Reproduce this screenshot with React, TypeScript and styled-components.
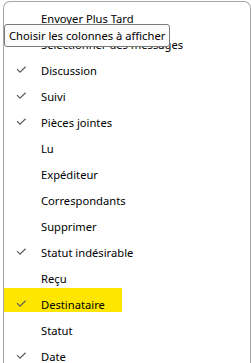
import styled, { createGlobalStyle } from "styled-components";

const GlobalStyle = createGlobalStyle`
  html, body {
    margin: 0;
    padding: 0;
    background: #ffffff;
    overflow: hidden;
  }
  body {
    font-family: "Noto Sans", "Liberation Sans", sans-serif;
  }
`;

const Page = styled.div`
  position: relative;
  width: 251px;
  height: 363px;
  overflow: hidden;
  padding: 1px 0 0 3px;
  box-sizing: border-box;
`;

const Menu = styled.ul`
  list-style: none;
  margin: 0;
  padding: 3px 0 0 0;
  width: 248px;
  height: 400px;
  box-sizing: border-box;
  background: #ffffff;
  border: 1px solid #a6a6a6;
  border-bottom: none;
  border-radius: 7px 7px 0 0;
`;

const Item = styled.li<{ $highlight?: boolean }>`
  position: relative;
  display: flex;
  align-items: center;
  height: 26px;
  padding-left: 12px;
  font-size: 11.2px;
  color: #000000;

  &::before {
    content: "";
    display: ${(p) => (p.$highlight ? "block" : "none")};
    position: absolute;
    left: 0;
    top: -3px;
    width: 118px;
    height: 24px;
    background: #ffe600;
  }
`;

const CheckSlot = styled.span`
  position: relative;
  z-index: 1;
  width: 25px;
  height: 26px;
  display: flex;
  align-items: center;
`;

const Label = styled.span`
  position: relative;
  z-index: 1;
  white-space: nowrap;
`;

const Tooltip = styled.div`
  position: absolute;
  left: 4px;
  top: 24px;
  height: 21px;
  padding: 0 4px;
  display: flex;
  align-items: center;
  font-size: 11.2px;
  color: #000000;
  background: #fbfbfb;
  border: 1px solid #7a7a7a;
  border-radius: 3px;
  white-space: nowrap;
  z-index: 5;
`;

const Check = () => (
  <svg width="11" height="8" viewBox="0 0 11 8">
    <path d="M1 3.2 L4 6.2 L9.6 0.8" fill="none" stroke="#5c5c5c" strokeWidth="1.2" />
  </svg>
);

const items = [
  { label: "Envoyer Plus Tard", checked: false },
  { label: "Sélectionner des messages", checked: false },
  { label: "Discussion", checked: true },
  { label: "Suivi", checked: true },
  { label: "Pièces jointes", checked: true },
  { label: "Lu", checked: false },
  { label: "Expéditeur", checked: false },
  { label: "Correspondants", checked: false },
  { label: "Supprimer", checked: false },
  { label: "Statut indésirable", checked: true },
  { label: "Reçu", checked: false },
  { label: "Destinataire", checked: true, highlight: true },
  { label: "Statut", checked: false },
  { label: "Date", checked: true },
];

export default function App() {
  return (
    <Page>
      <GlobalStyle />
      <Menu>
        {items.map((it) => (
          <Item key={it.label} $highlight={it.highlight}>
            <CheckSlot>{it.checked && <Check />}</CheckSlot>
            <Label>{it.label}</Label>
          </Item>
        ))}
      </Menu>
      <Tooltip>Choisir les colonnes à afficher</Tooltip>
    </Page>
  );
}
